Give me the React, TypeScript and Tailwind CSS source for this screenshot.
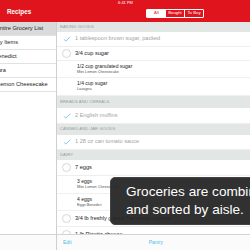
import React from "react";

const Check = () => (
  <svg width="8" height="6" viewBox="0 0 8 6" className="block">
    <path d="M0.8 3.2 L2.9 5.1 L7.2 0.8" fill="none" stroke="#7fcfee" strokeWidth="1" />
  </svg>
);

const Circle = () => (
  <div className="w-[9px] h-[9px] rounded-full border border-[#d6d6d6]" />
);

type Item =
  | { kind: "header"; text: string; h: string }
  | { kind: "row"; text: string; h: string; done: boolean }
  | { kind: "sub"; text: string; sub: string; h: string };

const items: Item[] = [
  { kind: "header", text: "BAKING GOODS", h: "h-[10px]" },
  { kind: "row", text: "1 tablespoon brown sugar, packed", h: "h-[15px]", done: true },
  { kind: "row", text: "3/4 cup sugar", h: "h-[14px]", done: false },
  { kind: "sub", text: "1/2 cup granulated sugar", sub: "Mini Lemon Cheesecake", h: "h-[17px]" },
  { kind: "sub", text: "1/4 cup sugar", sub: "Lasagna", h: "h-[18px]" },
  { kind: "header", text: "BREADS AND CEREALS", h: "h-[12px]" },
  { kind: "row", text: "2 English muffins", h: "h-[16px]", done: true },
  { kind: "header", text: "CANNED AND JAR GOODS", h: "h-[11px]" },
  { kind: "row", text: "1 28 oz can tomato sauce", h: "h-[15px]", done: true },
  { kind: "header", text: "DAIRY", h: "h-[10px]" },
  { kind: "row", text: "7 eggs", h: "h-[16px]", done: false },
  { kind: "sub", text: "3 eggs", sub: "Mini Lemon Cheesecake", h: "h-[18px]" },
  { kind: "sub", text: "4 eggs", sub: "Eggs Benedict", h: "h-[17px]" },
  { kind: "row", text: "3/4 lb freshly grated Parmesan cheese", h: "h-[16px]", done: false },
  { kind: "row", text: "1 lb Ricotta cheese", h: "h-[16px]", done: false },
];

const leftRows = [
  { text: "Entire Grocery List", off: "ml-[-4px]", active: true },
  { text: "My Items", off: "ml-[-5px]", active: false },
  { text: "Eggs Benedict", off: "ml-[-20px]", active: false },
  { text: "Carbonara", off: "ml-[-21px]", active: false },
  { text: "Mini Lemon Cheesecake", off: "ml-[-15px]", active: false },
];

export default function App() {
  return (
    <div
      className="relative w-[250px] h-[250px] overflow-hidden bg-white flex flex-col"
      style={{ fontFamily: '"Liberation Sans", Arial, sans-serif' }}
    >
      {/* Top red bar */}
      <div className="h-[22px] bg-[#e0141c] flex flex-col shrink-0">
        <div className="h-[6px] flex items-center justify-center text-white text-[4px] leading-none pl-[1px]">
          6:41 PM
        </div>
        <div className="flex flex-1">
          <div className="w-[57px] flex items-center pl-[7px] pb-[3px] text-white text-[6.3px] font-bold leading-none">
            Recipes
          </div>
          <div className="flex-1 flex items-start pt-[3px] pl-[89px]">
            <div className="flex h-[9px] border border-white rounded-[1px] text-[4.3px] leading-none">
              <div className="w-[19px] bg-white text-[#e0141c] flex items-center justify-center">All</div>
              <div className="w-[19px] text-white flex items-center justify-center border-r border-white">Bought</div>
              <div className="w-[18px] text-white flex items-center justify-center">To Buy</div>
            </div>
          </div>
        </div>
      </div>

      {/* Body */}
      <div className="flex flex-1 min-h-0">
        {/* Left column */}
        <div className="w-[57px] shrink-0 border-r border-[#cfcfcf] flex flex-col">
          <div className="flex-1 overflow-hidden">
            {leftRows.map((r) => (
              <div
                key={r.text}
                className={`h-[14px] border-b border-[#e2e2e2] flex items-center overflow-hidden whitespace-nowrap text-[5.7px] leading-none text-[#222] ${
                  r.active ? "bg-[#dadada]" : "bg-white"
                }`}
              >
                <span className={`shrink-0 ${r.off}`}>{r.text}</span>
              </div>
            ))}
          </div>
          <div className="h-[16px] border-t border-[#d4d4d4] bg-[#fbfbfb]" />
        </div>

        {/* Right column */}
        <div className="flex-1 flex flex-col min-w-0">
          <div className="flex-1 overflow-hidden">
            {items.map((it, i) => {
              if (it.kind === "header") {
                return (
                  <div
                    key={i}
                    className={`${it.h} bg-[#e2e6e5] flex items-center pl-[3px] text-[4.2px] leading-none text-[#959d9c] tracking-[0.1px]`}
                  >
                    {it.text}
                  </div>
                );
              }
              if (it.kind === "row") {
                return (
                  <div
                    key={i}
                    className={`${it.h} flex items-center border-b border-[#eeeeee] whitespace-nowrap`}
                  >
                    <div className="w-[18px] flex items-center justify-center pl-[1px]">
                      {it.done ? <Check /> : <Circle />}
                    </div>
                    <span
                      className={`text-[5.6px] leading-none ${
                        it.done ? "text-[#a3a3a3]" : "text-[#222]"
                      }`}
                    >
                      {it.text}
                    </span>
                  </div>
                );
              }
              return (
                <div
                  key={i}
                  className={`${it.h} flex flex-col justify-center pl-[20px] gap-[2px] border-b border-[#f0f0f0] whitespace-nowrap`}
                >
                  <span className="text-[5px] leading-none text-[#222]">{it.text}</span>
                  <span className="text-[3.8px] leading-none text-[#555]">{it.sub}</span>
                </div>
              );
            })}
          </div>
          <div className="h-[16px] border-t border-[#d4d4d4] bg-[#fbfbfb] flex items-center text-[5px] leading-none text-[#4fbdea]">
            <span className="ml-[6px]">Edit</span>
            <span className="ml-[77px]">Pantry</span>
          </div>
        </div>
      </div>

      {/* Overlay tip */}
      <div className="absolute left-[110px] top-[177px] w-[160px] h-[48px] rounded-[5px] bg-[#262626]/95 border border-[#444] flex flex-col justify-center pl-[15px] text-white text-[13.6px] leading-[18px] whitespace-nowrap">
        <span>Groceries are combined</span>
        <span>and sorted by aisle.</span>
      </div>
    </div>
  );
}
